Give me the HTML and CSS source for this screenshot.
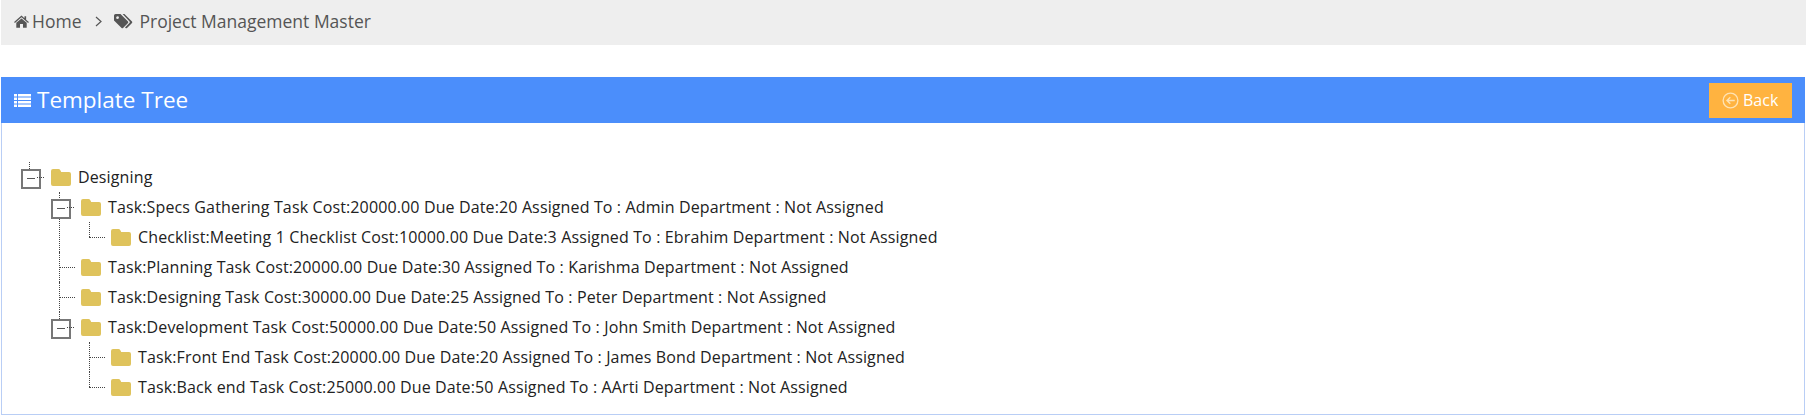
FILE: index.html
```html
<!DOCTYPE html>
<html lang="en">
<head>
<meta charset="utf-8">
<title>Template Tree</title>
<link rel="stylesheet" href="styles.css">
</head>
<body>
<nav class="crumbs">
  <svg class="ic-home" viewBox="0 0 16 14"><path d="M8 0.6 L11.2 3.4 V1.4 H13 V5 L16 7.6 L15.1 8.6 L8 2.5 L0.9 8.6 L0 7.6 Z M8 3.7 L13.6 8.4 V13.6 H9.6 V9.6 H6.4 V13.6 H2.4 V8.4 Z"/></svg>
  <span class="crumb-home">Home</span>
  <svg class="ic-chev" viewBox="0 0 7 11"><path d="M1 1 L6 5.5 L1 10" fill="none" stroke="#555" stroke-width="1.2"/></svg>
  <svg class="ic-tags" viewBox="0 0 20 15"><path d="M0 1.6 Q0 0 1.6 0 H6.5 L14 7.6 Q14.6 8.3 14 9 L9 14 Q8.3 14.6 7.6 14 L0 6.5 Z M3.5 2.2 A1.4 1.4 0 1 0 3.6 5 A1.4 1.4 0 1 0 3.5 2.2 Z"/><path d="M8.6 0 H10.4 L18 7.6 Q18.6 8.3 18 9 L13 14 Q12.3 14.6 11.6 14 L11 13.4 L15.6 8.8 Q16.2 8.2 15.6 7.4 Z"/></svg>
  <span>Project Management Master</span>
</nav>

<section class="panel">
  <header class="panel-head">
    <h1 class="panel-title">
      <svg class="ic-list" viewBox="0 0 17 13"><path d="M0 0 H3 V2.4 H0 Z M4 0 H17 V2.4 H4 Z M0 3.5 H3 V5.9 H0 Z M4 3.5 H17 V5.9 H4 Z M0 7 H3 V9.4 H0 Z M4 7 H17 V9.4 H4 Z M0 10.5 H3 V12.9 H0 Z M4 10.5 H17 V12.9 H4 Z"/></svg>
      Template Tree
    </h1>
    <a class="back" href="#">
      <svg class="ic-back" viewBox="0 0 18 18"><circle cx="9" cy="9" r="7.8" fill="none" stroke="#ffe3b3" stroke-width="1.4"/><path d="M13.5 9 H5.5 M8.8 5.6 L5.3 9 L8.8 12.4" fill="none" stroke="#ffe3b3" stroke-width="1.5"/></svg>
      Back
    </a>
  </header>

  <ul class="tree">
    <li>
      <div class="row"><span class="sw box"></span><span class="folder"><svg viewBox="0 0 20 17"><path d="M2 0 H7.5 Q8.6 0 9.2 1 L10.2 3 H18 Q20 3 20 5 V15 Q20 17 18 17 H2 Q0 17 0 15 V2 Q0 0 2 0 Z"/></svg></span><span class="label">Designing</span></div>
      <ul>
        <li>
          <div class="row"><span class="sw box"></span><span class="folder"><svg viewBox="0 0 20 17"><path d="M2 0 H7.5 Q8.6 0 9.2 1 L10.2 3 H18 Q20 3 20 5 V15 Q20 17 18 17 H2 Q0 17 0 15 V2 Q0 0 2 0 Z"/></svg></span><span class="label">Task:Specs Gathering Task Cost:20000.00 Due Date:20 Assigned To : Admin Department : Not Assigned</span></div>
          <ul>
            <li class="leaf">
              <div class="row"><span class="sw"></span><span class="folder"><svg viewBox="0 0 20 17"><path d="M2 0 H7.5 Q8.6 0 9.2 1 L10.2 3 H18 Q20 3 20 5 V15 Q20 17 18 17 H2 Q0 17 0 15 V2 Q0 0 2 0 Z"/></svg></span><span class="label">Checklist:Meeting 1 Checklist Cost:10000.00 Due Date:3 Assigned To : Ebrahim Department : Not Assigned</span></div>
            </li>
          </ul>
        </li>
        <li class="leaf">
          <div class="row"><span class="sw"></span><span class="folder"><svg viewBox="0 0 20 17"><path d="M2 0 H7.5 Q8.6 0 9.2 1 L10.2 3 H18 Q20 3 20 5 V15 Q20 17 18 17 H2 Q0 17 0 15 V2 Q0 0 2 0 Z"/></svg></span><span class="label">Task:Planning Task Cost:20000.00 Due Date:30 Assigned To : Karishma Department : Not Assigned</span></div>
        </li>
        <li class="leaf">
          <div class="row"><span class="sw"></span><span class="folder"><svg viewBox="0 0 20 17"><path d="M2 0 H7.5 Q8.6 0 9.2 1 L10.2 3 H18 Q20 3 20 5 V15 Q20 17 18 17 H2 Q0 17 0 15 V2 Q0 0 2 0 Z"/></svg></span><span class="label">Task:Designing Task Cost:30000.00 Due Date:25 Assigned To : Peter Department : Not Assigned</span></div>
        </li>
        <li>
          <div class="row"><span class="sw box"></span><span class="folder"><svg viewBox="0 0 20 17"><path d="M2 0 H7.5 Q8.6 0 9.2 1 L10.2 3 H18 Q20 3 20 5 V15 Q20 17 18 17 H2 Q0 17 0 15 V2 Q0 0 2 0 Z"/></svg></span><span class="label">Task:Development Task Cost:50000.00 Due Date:50 Assigned To : John Smith Department : Not Assigned</span></div>
          <ul>
            <li class="leaf">
              <div class="row"><span class="sw"></span><span class="folder"><svg viewBox="0 0 20 17"><path d="M2 0 H7.5 Q8.6 0 9.2 1 L10.2 3 H18 Q20 3 20 5 V15 Q20 17 18 17 H2 Q0 17 0 15 V2 Q0 0 2 0 Z"/></svg></span><span class="label">Task:Front End Task Cost:20000.00 Due Date:20 Assigned To : James Bond Department : Not Assigned</span></div>
            </li>
            <li class="leaf">
              <div class="row"><span class="sw"></span><span class="folder"><svg viewBox="0 0 20 17"><path d="M2 0 H7.5 Q8.6 0 9.2 1 L10.2 3 H18 Q20 3 20 5 V15 Q20 17 18 17 H2 Q0 17 0 15 V2 Q0 0 2 0 Z"/></svg></span><span class="label">Task:Back end Task Cost:25000.00 Due Date:50 Assigned To : AArti Department : Not Assigned</span></div>
            </li>
          </ul>
        </li>
      </ul>
    </li>
  </ul>
</section>
</body>
</html>
```

FILE: styles.css
```css
* { box-sizing: border-box; }
html, body { margin: 0; padding: 0; background: #fff; }
body {
  padding: 0 1px;
  height: 417px;
  overflow: hidden;
  font-family: "Open Sans", sans-serif;
  color: #333;
}
svg { display: block; flex: none; }

.crumbs {
  display: flex;
  align-items: center;
  height: 45px;
  padding-left: 13px;
  padding-bottom: 3px;
  background: #eee;
  color: #555;
  font-size: 17.5px;
}
.crumbs svg { fill: #555; }
.ic-home { width: 15px; height: 13px; margin-right: 3px; }
.ic-chev { width: 7px; height: 11px; margin: 1px 12px 0 14px; }
.ic-tags { width: 20px; height: 15px; margin-right: 5px; }

.panel {
  margin-top: 32px;
  margin-right: 1px;
  height: 338px;
  border: 1px solid #b9cef5;
  border-top: 0;
}
.panel-head {
  display: flex;
  align-items: center;
  justify-content: space-between;
  height: 46px;
  margin: 0 -1px;
  padding: 0 13px 0 13px;
  background: #4b8efb;
  color: #fff;
}
.panel-title {
  display: flex;
  align-items: center;
  gap: 6px;
  margin: 0 0 2px;
  font-size: 22.5px;
  font-weight: 400;
}
.ic-list { width: 17px; height: 13px; fill: #fff; margin-top: 2px; }
.back {
  display: flex;
  align-items: center;
  gap: 4px;
  width: 83px;
  height: 35px;
  padding-left: 13px;
  background: #ffb340;
  color: #fff;
  font-size: 16px;
  text-decoration: none;
}
.ic-back { width: 17px; height: 17px; }

.tree, .tree ul { list-style: none; margin: 0; }
.tree { padding: 39px 0 0 19px; }
.tree ul { padding: 0 0 0 30px; }
.tree li { position: relative; }
.tree li::before {
  content: "";
  position: absolute;
  left: 8px;
  top: 0;
  bottom: 0;
  border-left: 1px dotted #444;
}
.tree li:last-child::before { bottom: auto; height: 7px; }
.tree li.leaf:last-child::before { height: 15px; }

.row {
  position: relative;
  display: flex;
  align-items: center;
  height: 30px;
  font-size: 16px;
  letter-spacing: 0.13px;
  color: #222;
}
.sw { position: relative; width: 30px; height: 16px; flex: none; margin-top: -1px; }
.sw::after {
  content: "";
  position: absolute;
  left: 8px;
  top: 8px;
  width: 16px;
  border-top: 1px dotted #444;
}
.box::before {
  content: "";
  position: absolute;
  left: 0;
  top: 0;
  width: 16px;
  height: 16px;
  border: 2px solid #777;
  background: linear-gradient(#555, #555) center / 8px 1px no-repeat #fff;
}
.box::after { left: 16px; width: 7px; }
.folder { width: 20px; margin-right: 7px; flex: none; }
.folder svg { width: 20px; height: 17px; fill: #dfc35c; }
.label { white-space: nowrap; line-height: 28px; margin-top: -1px; }
```
